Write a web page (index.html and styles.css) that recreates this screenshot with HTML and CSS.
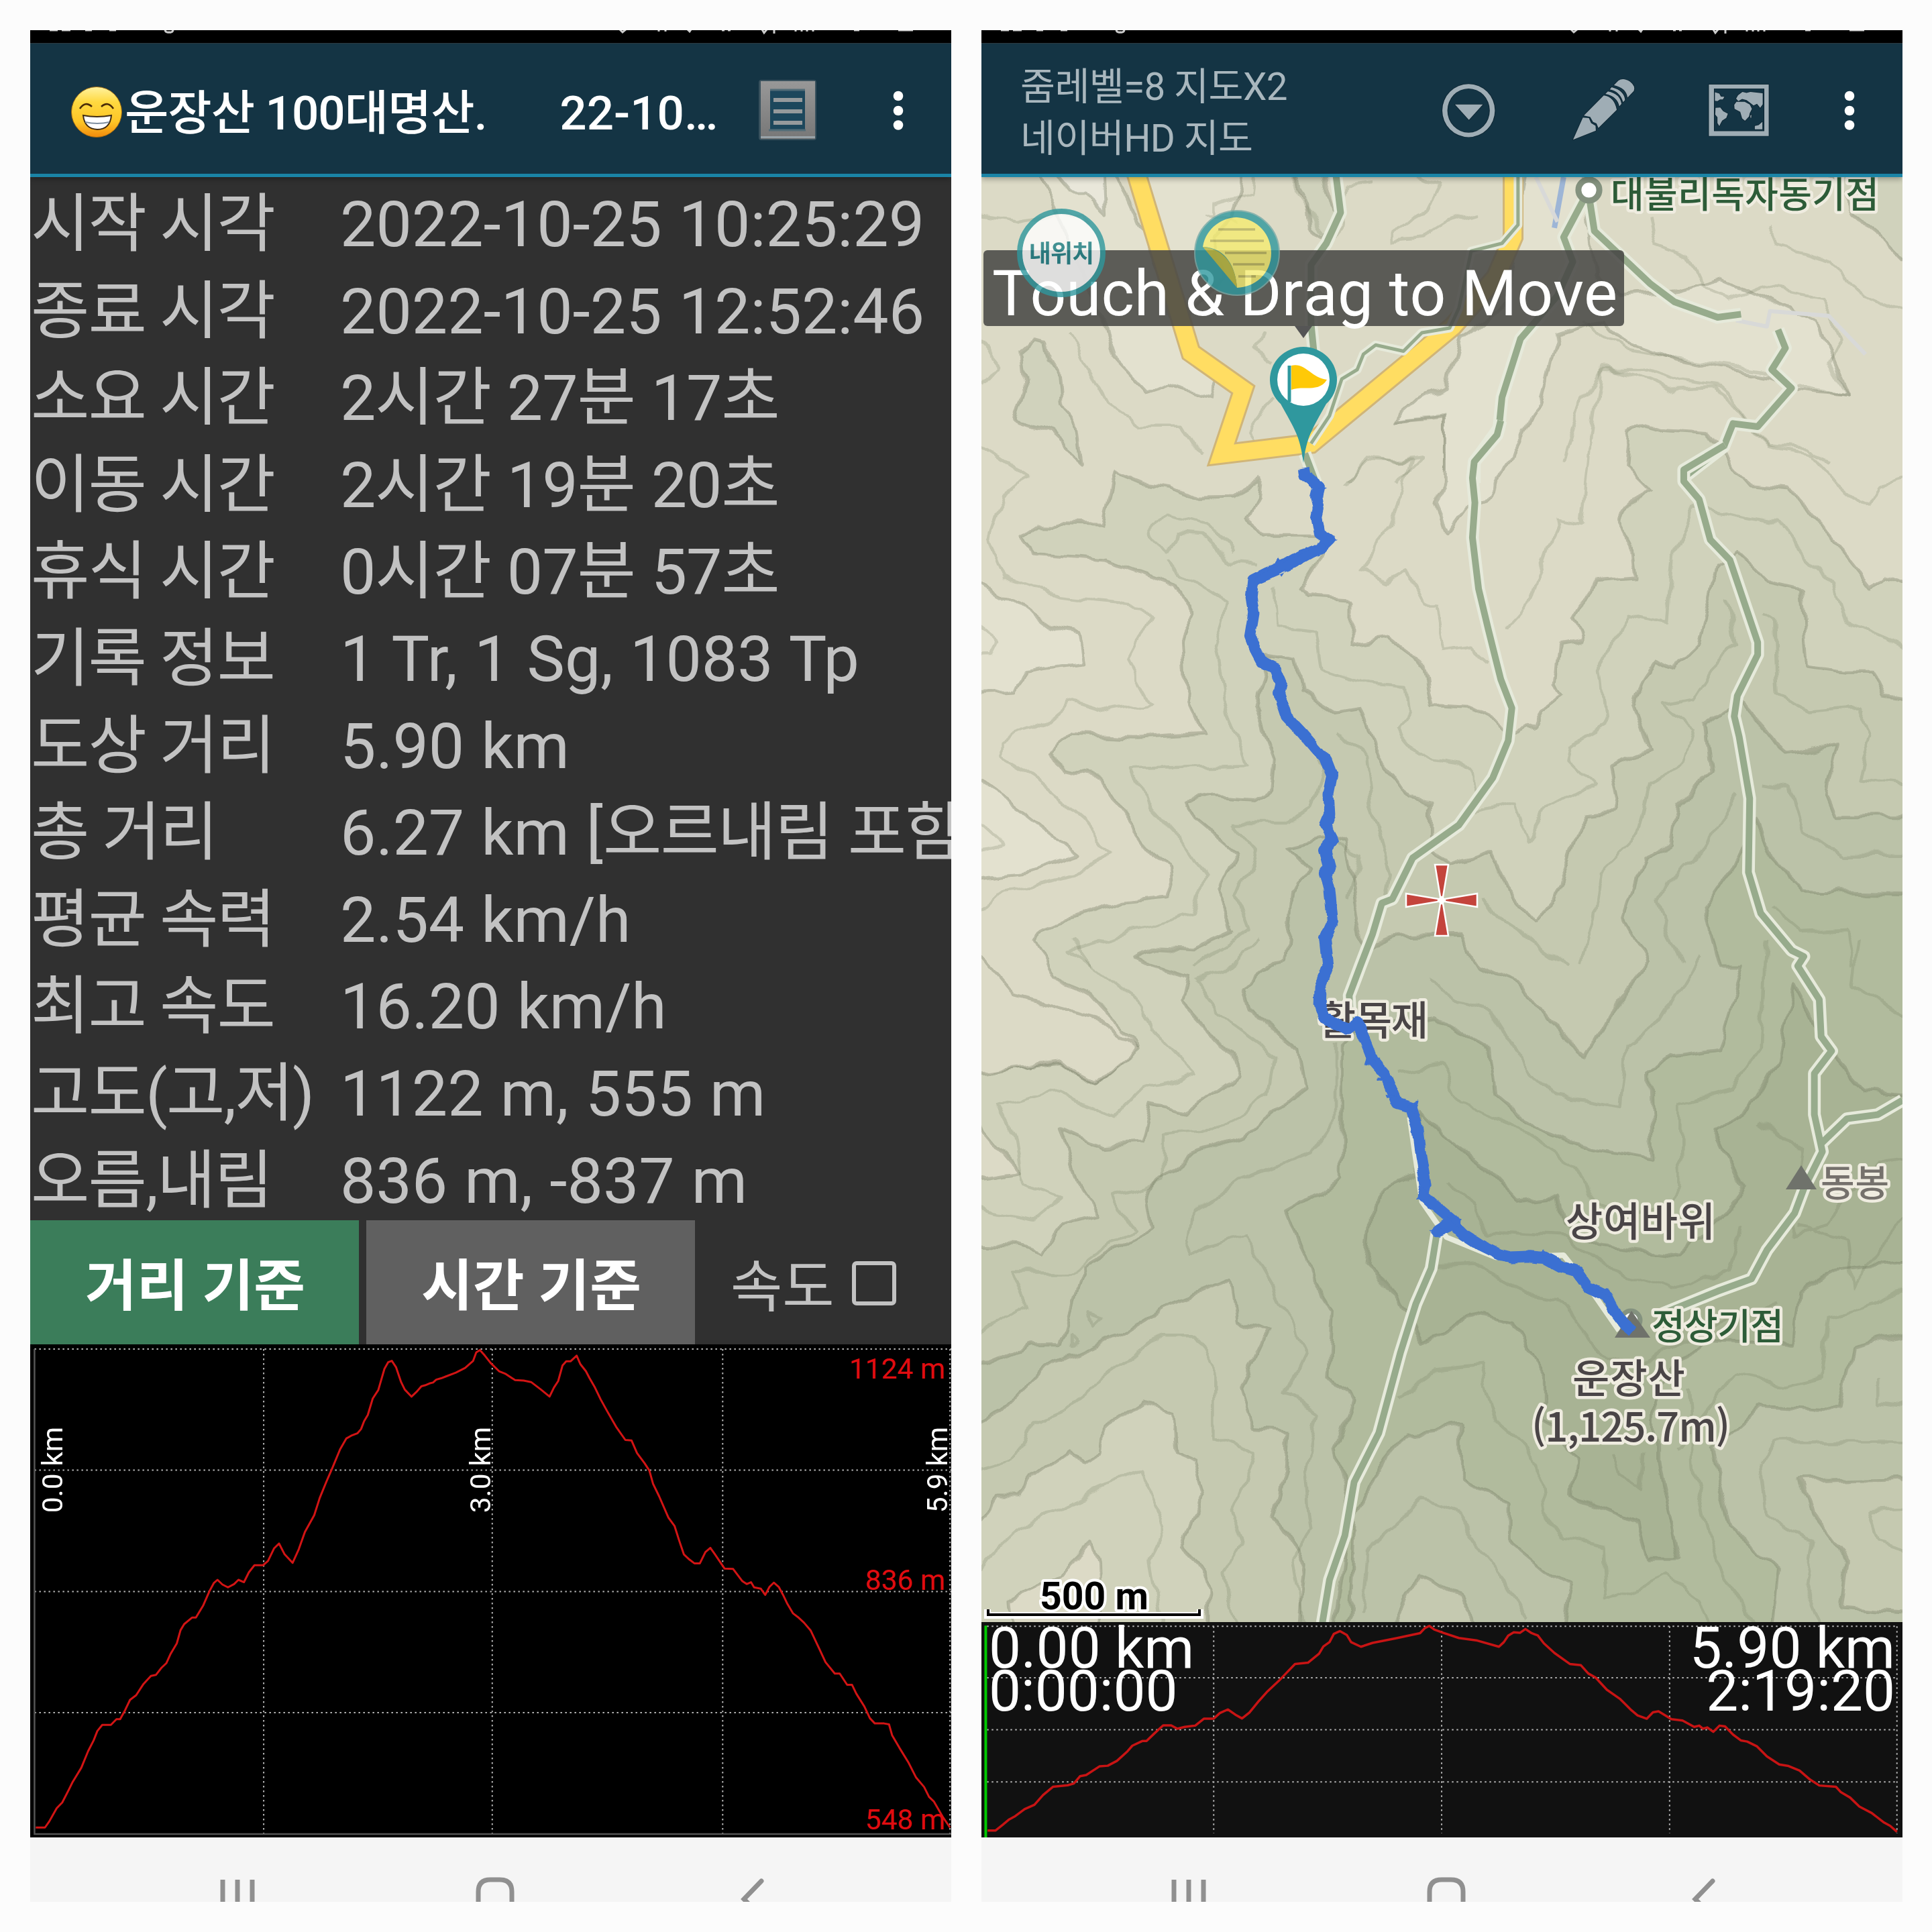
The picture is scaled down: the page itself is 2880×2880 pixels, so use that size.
FILE: index.html
```html
<!DOCTYPE html>
<html lang="ko">
<head>
<meta charset="utf-8">
<title>운장산 100대명산</title>
<link rel="stylesheet" href="styles.css">
</head>
<body>
<svg width="0" height="0" class="defs">
  <defs>
    <g id="status-bits">
      <path d="M29 0h12M47 0h13M82 0h10M118 0h10"/>
      <path d="M201 0q1 4 6 3q5 1 6 -3"/>
      <path d="M879 -1l4 4l6 -5M937 0v2M947 0v2M980 -1l3 3l2 -3M1031 0h4M1040 0h4M1091 -1l3 5l4 -5M1109 0v5M1141 0v2M1150 0v2M1158 0v2M1167 0v2M1228 0h8M1294 0h22"/>
    </g>
    <g id="nav-icons">
      <path d="M287 63v40M309 63v40M331 63v40"/>
      <path d="M668 103v-22q0 -18 18 -18h14q18 0 18 18v22"/>
      <path d="M1090 65l-26 27l14 14" stroke-linecap="round"/>
    </g>
  </defs>
</svg>
<main class="collage">

  <section class="phone">
    <svg class="status" viewBox="0 0 1373 19"><use href="#status-bits"/></svg>
    <header class="bar">
      <svg class="emoji" viewBox="0 0 78 78">
        <defs>
          <linearGradient id="face" x2="0" y2="1"><stop offset="0" stop-color="#fff2a0"/><stop offset=".3" stop-color="#ffd940"/><stop offset=".7" stop-color="#fdc526"/><stop offset="1" stop-color="#f28a0c"/></linearGradient>
        </defs>
        <circle cx="39" cy="39" r="37.5" fill="url(#face)" stroke="#a06a10" stroke-width="1"/>
        <path d="M14 34q8 -12 18 -3M46 31q10 -9 18 3" fill="none" stroke="#4a2c08" stroke-width="2.6"/>
        <path d="M19 44q20 4 42 0q-2 21 -21 21q-19 -1 -21 -21z" fill="#fff" stroke="#3e2a12" stroke-width="2"/>
        <path d="M22 54q18 4 36 0" fill="none" stroke="#7f8fa0" stroke-width="2"/>
      </svg>
      <h1 class="title"><span>운장산 100대명산.</span><span class="date">22-10…</span></h1>
      <svg class="list" viewBox="0 0 90 94">
        <defs><linearGradient id="steel" x2="0" y2="1"><stop offset="0" stop-color="#989898"/><stop offset="1" stop-color="#777"/></linearGradient></defs>
        <rect x="2" y="2" width="86" height="90" rx="4" fill="#5f7078" opacity=".5"/>
        <rect x="5" y="4" width="81" height="86" fill="url(#steel)"/>
        <rect x="5" y="86" width="81" height="3" fill="#98a2a8"/>
        <rect x="19" y="18" width="52" height="60" fill="#1c475c"/>
        <path d="M19 17h52M17 77h55" stroke="#526d78" stroke-width="3"/>
        <path d="M24 32h43M24 49h43M24 66h43" stroke="#959a9c" stroke-width="6"/>
      </svg>
      <svg class="more" viewBox="0 0 16 60"><circle cx="8" cy="8" r="7.3"/><circle cx="8" cy="30" r="7.3"/><circle cx="8" cy="51.500" r="7.3"/></svg>
    </header>

    <dl class="stats">
      <dt>시작 시각</dt><dd>2022-10-25 10:25:29</dd>
      <dt>종료 시각</dt><dd>2022-10-25 12:52:46</dd>
      <dt>소요 시간</dt><dd class="ko">2시간 27분 17초</dd>
      <dt>이동 시간</dt><dd class="ko">2시간 19분 20초</dd>
      <dt>휴식 시간</dt><dd class="ko">0시간 07분 57초</dd>
      <dt>기록 정보</dt><dd class="counts">1 Tr, 1 Sg, 1083 Tp</dd>
      <dt>도상 거리</dt><dd>5.90 km</dd>
      <dt>총 거리</dt><dd>6.27 km [<span class="note">오르내림 포함]</span></dd>
      <dt>평균 속력</dt><dd>2.54 km/h</dd>
      <dt>최고 속도</dt><dd>16.20 km/h</dd>
      <dt>고도(고,저)</dt><dd>1122 m, 555 m</dd>
      <dt>오름,내림</dt><dd>836 m, -837 m</dd>
    </dl>

    <div class="tabs">
      <button class="tab on">거리 기준</button>
      <button class="tab">시간 기준</button>
      <label class="speed">속도<i class="box"></i></label>
    </div>

    <div class="chart">
      <svg class="plot" viewBox="49 319 1495 1047" preserveAspectRatio="none">
        <path class="grid" d="M56 329H1544M56 586H1544M56 844H1544M56 1101H1544M428 329V1359M799 329V1359M1173 329V1359M1542 329V1359"/>
        <path class="axis" d="M56 329V1359H1544"/>
        <path class="line" d="M58 1345H73L80 1332L92 1304L101 1292L112 1264L118 1248L132 1218L143 1183L152 1160L158 1140L166 1127H180L189 1115H195L203 1096L211 1074L221 1064L233 1040L245 1023L253 1021L262 1006L270 996L277 976L287 954L293 926L299 913L312 899H318L330 873L340 843L347 826L353 819L361 829L370 835L380 828L387 819L396 824L404 803L413 788H427L435 779L445 752L453 742L462 765L475 783L485 754L495 717L510 682L519 645L530 610L540 580L552 542L562 519L570 513L580 508L586 499L591 482L597 469L605 434L614 416L624 371L630 357L636 354L643 368L651 399L657 415L668 430L676 420L684 408L690 406L697 402L703 400L708 394L716 391L724 387L740 379L755 369L768 354L773 336L779 331L787 343L796 358L810 376L821 382L836 395L850 396L862 399L878 415L892 430L899 411L906 397L913 364L919 355H926L936 343L942 361L951 376L957 391L965 409L975 436L986 462L1000 494L1015 522L1025 523L1034 550L1046 571L1054 587L1060 615L1070 642L1085 687L1095 705L1102 734L1110 765L1119 776L1127 784H1136L1145 760L1153 751L1160 764L1176 795L1190 796L1205 822L1212 828L1219 824L1224 835L1235 838L1242 851L1249 834L1256 825L1264 834L1271 851L1278 870L1287 890L1295 898L1305 910L1316 927L1330 966L1340 994L1355 1018H1363L1375 1042H1383L1390 1061L1403 1088L1412 1113L1420 1124H1435L1443 1126L1448 1149L1460 1176L1475 1208L1487 1239L1500 1259L1508 1280L1516 1290L1530 1322L1542 1345"/>
      </svg>
      <span class="alt top">1124 m</span>
      <span class="alt mid">836 m</span>
      <span class="alt low">548 m</span>
      <span class="dist d0">0.0 km</span>
      <span class="dist d1">3.0 km</span>
      <span class="dist d2">5.9 km</span>
    </div>
    <svg class="nav" viewBox="0 0 1373 96"><use href="#nav-icons"/></svg>
  </section>

  <section class="phone">
    <svg class="status" viewBox="0 0 1373 19"><use href="#status-bits"/></svg>
    <header class="bar">
      <p class="level">줌레벨=8 지도X2<br>네이버HD 지도</p>
      <svg class="tools" viewBox="90 210 1070 310" preserveAspectRatio="none">
        <g class="glyph">
          <path fill-rule="evenodd" d="M107 372a83 119 0 1 0 166 0a83 119 0 1 0 -166 0zM123 372a67 99 0 1 1 134 0a67 99 0 1 1 -134 0z"/>
          <path d="M147 345H235L191 414z"/>
          <path d="M520 503L551 403L570 406L577 428L591 440L592 462z"/>
          <path d="M554 394L617 304Q650 310 658 369L600 450L594 430L583 423L574 400z"/>
          <path d="M622 297L630 286Q668 296 673 342L666 353Q660 308 622 297z"/>
          <path d="M636 277L642 267Q682 282 684 325L678 334Q668 286 636 277z"/>
          <path d="M649 258L663 238Q678 223 700 242Q718 262 712 284L692 314Q688 270 649 258z"/>
          <path fill-rule="evenodd" d="M949 255H1138V486H949zM965 273V464H1124V273z"/>
          <path d="M968 290L982 296L987 309L998 310L993 322H984L976 330L968 328zM970 360L985 358L994 375L1009 386L1004 405L991 417L986 430L982 442L976 428V402L969 390z"/>
          <path d="M1036 333H1062L1078 345L1085 364L1078 384L1076 398L1063 418L1054 407L1048 378L1030 364L1029 346zM1035 318L1041 303L1055 288L1068 293L1080 288L1119 294V344L1111 360L1101 342L1090 349L1078 336L1068 325L1054 320L1042 330zM1083 390V404H1080V394zM1094 456V441L1106 437L1118 422V456z"/>
        </g>
      </svg>
      <svg class="more" viewBox="0 0 16 60"><circle cx="8" cy="8" r="7.3"/><circle cx="8" cy="30" r="7.3"/><circle cx="8" cy="51.500" r="7.3"/></svg>
    </header>

    <div class="map">
      <svg class="terrain" viewBox="1463 264 1373 2154">
        <defs>
          <filter id="wander" filterUnits="userSpaceOnUse" x="1443" y="244" width="1413" height="2194" color-interpolation-filters="sRGB">
            <feTurbulence type="fractalNoise" baseFrequency=".022" numOctaves="2" seed="4"/>
            <feDisplacementMap in="SourceGraphic" scale="24" xChannelSelector="R" yChannelSelector="G"/>
          </filter>
          <filter id="jitter" filterUnits="userSpaceOnUse" x="1443" y="244" width="1413" height="2194" color-interpolation-filters="sRGB">
            <feTurbulence type="fractalNoise" baseFrequency=".05" numOctaves="2" seed="9"/>
            <feDisplacementMap in="SourceGraphic" scale="7" xChannelSelector="R" yChannelSelector="G"/>
          </filter>
        </defs>
        <g filter="url(#wander)">
        <rect x="1443" y="244" width="1413" height="2194" fill="#dcdac6"/>
        <!-- elevation bands, lowest to highest -->
        <g class="bands" transform="matrix(.9184 0 0 .6122 1440 480)">
          <path fill="#e3e1cf" d="M120 -373L220 0L240 90L290 170L330 150L395 180L410 130L360 80L330 -20L270 -373zM240 -373H450L430 -250L400 -200L420 -110L350 0zM910 -373H1000L1020 -120L1060 -60L1160 -70L1230 -100L1290 -60L1380 0L1430 175L1350 160L1300 130L1150 90L1060 40L1040 -10L960 30L930 190L850 430L810 450L780 512L760 440L780 390V232L690 244L730 190L780 160L800 40L880 -50zM5 620L80 680L135 740L180 755L187 830L95 850L80 900L5 905zM5 1100L100 1200L183 1298L100 1340L5 1358zM5 1580L80 1700L5 1690z"/>
          <path fill="#e9e7da" d="M140 -373L170 -320L195 -320L225 -255L222 -373z"/>
          <path fill="#d0d2bc" d="M110 42L125 48L132 100L150 125L155 195L185 260L192 340L140 270L80 240L95 170L88 70zM520 -373H575L600 -250L580 -205L560 -230L555 -290zM1400 -373H1540V-120L1480 -210L1440 -260z"/>
          <path fill="#d0d2bb" d="M240 365L285 393L335 403L375 430L430 428L475 390L472 430L455 478L490 520H580L575 570L540 655L550 672L625 680V785L685 772L742 835L755 935L820 940L895 995L907 980L920 997L932 945L965 910L955 880L962 785L1000 775L985 722L1020 630L1090 622L1085 550L1060 480L1110 410L1070 350L1075 265L1090 248L1130 265L1200 272L1275 402L1340 410L1390 500L1470 650L1490 622L1545 650V3200H0V1828L150 1806L210 1855L280 1763L200 1633L145 1600L112 1503L120 1480L250 1410L330 1398L325 1330L290 1262L250 1180L220 1110L165 1092L135 1050L175 1003L270 1010L385 1000L355 900L350 780L370 712L340 640L230 580L110 565L85 522L120 488L220 492z"/>
          <path fill="#c5c9b0" d="M490 810L535 822L545 900L600 950L640 940L670 1060L720 1160L755 1170V1290L790 1320L850 1288L882 1390L925 1462L960 1400L990 1270L1010 1200L1060 1192L1045 1080L1110 1040L1085 930L1120 820L1150 840L1190 780L1220 590L1250 560L1300 632L1355 650L1365 838L1430 850L1470 850L1490 912L1545 925V3200H0V2245L80 2250L125 2272L160 2196L215 2180L185 2110L155 1963L220 2007L285 2001L300 1904L360 1925L440 1839L430 1785L350 1655L360 1590L268 1545L300 1525L370 1530L435 1485L410 1380L440 1290L375 1210L362 1165L400 1155L470 1162L495 1140L500 1060L470 940z"/>
          <path fill="#bbc2a8" d="M520 1275L590 1250L615 1262L650 1530L700 1500L800 1495L830 1568L900 1611L980 1763L1005 1795L1050 1676L1110 1557L1070 1450L1100 1310L1145 1270L1155 1170L1210 1100L1200 980L1260 920L1310 1020L1335 1052L1415 1025L1395 1150L1410 1205L1545 1205V3200H0V2555L105 2489L155 2489L190 2304L300 2207L290 2110L360 2034L450 1990L550 1871L540 1774L460 1676L450 1622L520 1546L530 1390L555 1330z"/>
          <path fill="#b1bb9d" d="M520 2163L610 2088V1763L640 1720L765 1698L850 1774L860 1882L920 1958L1010 2010L1115 2039L1110 1828L1150 1790L1220 1774L1260 1568L1225 1568L1200 1430L1250 1320L1280 1210L1300 1290L1360 1385L1545 1390V3200H595L625 2911L600 2749L625 2630L590 2575L595 2402L560 2315z"/>
        </g>
        <g class="bands" transform="matrix(.9184 0 0 .66327 1440 1400)">
          <path fill="#a8b394" d="M740 380L770 440L830 500L890 590L960 580L970 640L1030 690L1160 712L1215 640L1260 560L1215 430L1275 385L1320 270L1345 100L1400 250L1460 345L1545 355V720L1420 740L1350 790L1340 910L1200 900L1120 1000V1180L1155 1395H1105L1090 1310L985 1250L990 1160L940 1080V980L890 860L820 840L740 910L700 800L650 740L660 600L680 560L730 530z"/>
          <path fill="#c5c9b0" d="M0 1100L60 1060L130 960L260 880L330 820L430 765L440 850L490 880L445 1010L465 1100L525 1105L520 1200L500 1300L550 1400L540 1560H0z"/>
          <path fill="#d0d2bb" d="M0 1365L50 1250L90 1250L110 1210L170 1150L190 1180L220 1150L225 1100L290 1040L335 1060L340 1150L375 1170L390 1240L350 1360L395 1460V1560H0z"/>
          <path fill="#dcdac6" d="M205 1355L150 1430L75 1480L80 1560H220L215 1400zM0 0L80 130L215 180L280 245L210 325L150 278L0 305zM0 380L85 520L0 540z"/>
          <path fill="#bbc2a8" d="M620 1560L630 1300L665 1200L720 1110L805 1098V1215L880 1260V1350L950 1430L980 1450L965 1560zM1310 1560L1320 1420L1240 1320L1210 1150L1290 1050L1420 1060L1440 920L1545 885V1560z"/>
          <path fill="#c5c9b0" d="M685 1560L735 1430L800 1470L835 1560zM1545 1208L1350 1218L1370 1290L1430 1400L1420 1500L1545 1515z"/>
        </g>
        <!-- intermediate contours -->
        <g class="contour" transform="matrix(.9184 0 0 .45918 1440 0)">
          <path d="M5 700L90 720L145 695L185 690L200 730M470 555L465 625L400 660V700L390 700L440 725M520 555L560 690L580 760M660 590L620 600L610 730L590 780M700 555L770 600L750 680L690 750V780L740 770L780 720L830 690M1110 700L1120 790L1175 830L1200 940L1240 970L1290 930L1390 970L1420 1100L1400 1180L1430 1280L1350 1245M1300 730L1320 800L1400 850L1460 960L1540 1030M1000 1040L1070 1130L1150 1160L1290 1200L1340 1240M5 1080L50 1190L5 1290M170 1080L200 1200L230 1310L280 1380L350 1380L380 1480M480 1080L470 1140L500 1180M690 1370L780 1350V1530M970 1500L1000 1300L1030 1200L1100 1200L1160 1240L1220 1260L1260 1330L1300 1440L1360 1450L1400 1500M500 1290L460 1400L470 1430L520 1420M620 1568L650 1480L700 1500L740 1490L700 1568"/>
        </g>
        <g class="contour" transform="matrix(.9184 0 0 .6122 1440 480)">
          <path d="M5 280L105 380L60 420L35 530L60 620L150 670L290 690L300 720L265 820L305 930L230 950L165 920L110 990L55 1020V1060L110 1110L190 1210L230 1290L180 1350L60 1390L5 1450M5 730L50 780L40 810L5 812M5 1200L60 1275L5 1295M480 590L430 585L385 520L345 515L325 560L300 510L325 465L390 490L430 560M330 580L350 620L425 690L405 790L420 920L455 1080L270 1090L290 1170L345 1260L385 1350L370 1440L165 1530L200 1568M500 640L505 740L570 750L580 850L640 880L715 890L720 950L700 990L740 1060L820 1080L830 1200L890 1175L910 1265L940 1190L1015 1130L975 1070L980 1030L1040 980L1030 850L1070 710L1140 730L1150 560L1180 450L1320 490L1360 570L1410 640L1430 730L1540 800M615 400L650 335L720 340L690 500L640 600L685 630L715 605L740 690L765 690L780 800L815 790L845 830M875 745L915 680L960 480L1000 490L1015 270L1030 110L1080 125L1150 170L1210 165L1260 220L1300 300L1370 320L1400 370L1465 450L1480 400L1540 375M430 1220L520 1220L560 1180L580 1080L540 990M430 1220L470 1290L440 1400L460 1480L370 1568M600 1000L650 1060L660 1180L690 1350L680 1440M590 1260L640 1300L620 1400M840 1390L860 1450L950 1540L980 1568M1000 1568L1020 1450L1030 1340L1090 1250L1110 1120L1165 1080L1180 1000L1130 935L1180 920L1210 850L1250 790L1240 680M1290 710L1310 730L1315 910L1370 950L1450 940L1470 1000L1450 1110L1540 1125M1290 1130L1340 1140L1360 1240L1420 1300L1540 1300M1250 1150L1190 1300L1120 1400L1160 1568M1310 1430L1350 1480L1430 1475L1440 1568"/>
        </g>
        <g class="contour" transform="matrix(.9184 0 0 .66327 1440 1400)">
          <path d="M170 0L200 60L290 150L300 200L370 300L290 330L240 400L150 340L50 375L75 440L90 550L155 580L110 630L5 600M370 95L420 70L480 0M370 95L410 170L500 260L490 350L400 430L320 440L320 540L240 580L270 650L170 750L75 750L100 830L5 890M600 230V400L560 480L450 540L370 610L360 710L450 660L500 780L550 930L520 1020L570 1060L550 1200L560 1330L530 1390L550 1556M700 300L770 280L800 370L890 420L990 510L1020 590L1110 620L1160 560V370L1240 340L1290 240L1300 0M750 90L800 140L850 160L910 290L960 350L1060 375L1070 240L1130 180L1190 40M700 1030L760 970L835 960L860 1080L900 1130L930 1180L940 1290L970 1350L1035 1370L1040 1490L1140 1430L1190 1480L1210 1556M640 1520L650 1380L740 1260L800 1290L840 1380L880 1450L910 1530M160 1060L240 970L320 890L370 890L400 960L400 1120L470 1160L430 1290L450 1360L420 1430L440 1556M5 1195L70 1170L110 1090L160 1060M5 1440L80 1340L130 1290L280 1200L320 1320L300 1400L320 1556M760 740L830 735L910 800L960 810L1010 900L1040 940L1100 960L1190 880L1310 820M780 550L830 600L850 660L970 670L1040 740L1150 790L1240 740L1260 650M1290 410L1360 480L1340 660L1400 640L1480 500L1540 490M1350 640L1430 680L1440 780L1540 590M1170 1000L1180 1180L1200 1300L1220 1400L1280 1556M1050 1150L1060 1210L1095 1240L1100 1160M1150 1150L1250 980L1330 1000L1390 980L1400 850L1480 820L1540 770M1290 1180L1310 1130L1540 1130M1290 1180L1300 1290L1370 1350L1360 1450L1390 1556M1540 1280L1465 1285L1480 1350L1540 1375M1480 980V1040L1540 1052M200 840L220 850L205 870zM170 885L180 900L170 915zM1450 0L1440 100L1540 190"/>
        </g>
        </g>

        <!-- roads -->
        <g class="roads" transform="matrix(.9184 0 0 .45918 1440 0)">
          <path class="yc" d="M276 560L365 1145L450 1265L415 1475L560 1440L790 1060L860 900L888 770V560"/>
          <path class="yf" d="M276 560L365 1145L450 1265L415 1475L560 1440L790 1060L860 900L888 770V560"/>
          <path class="wc thin" d="M896 560V730L870 790L820 815L800 1000L785 1065L740 1080L710 1140L665 1120L645 1150L635 1200L610 1230L590 1350L560 1440"/>
          <path class="gf thin" d="M896 560V730L870 790L820 815L800 1000L785 1065L740 1080L710 1140L665 1120L645 1150L635 1200L610 1230L590 1350L560 1440"/>
          <path class="stream" d="M970 575L955 740"/><path class="lane" d="M925 575L960 720M1250 1040L1300 1060L1305 1010L1400 1025L1460 1150"/>
          <path class="wc" d="M600 560L608 690L585 790L560 860V1050L565 1150"/>
          <path class="gf" d="M600 560L608 690L585 790L560 860V1050L565 1150"/>
          <path class="wc" d="M1010 620L970 770L985 850L960 960L900 1100L870 1290L865 1390L825 1500V1568M1010 620L1020 750L1110 920L1150 980L1220 1030L1258 1020M1318 1070L1330 1130L1308 1200L1340 1260L1285 1385L1245 1375L1230 1450L1165 1550"/>
          <path class="gf" d="M1010 620L970 770L985 850L960 960L900 1100L870 1290L865 1390L825 1500V1568M1010 620L1020 750L1110 920L1150 980L1220 1030L1258 1020M1318 1070L1330 1130L1308 1200L1340 1260L1285 1385L1245 1375L1230 1450L1165 1550"/>
          <ellipse cx="1011" cy="617" rx="17" ry="34" fill="#fff" stroke="#84927f" stroke-width="9" vector-effect="non-scaling-stroke"/>
        </g>
        <g class="roads" transform="matrix(.9184 0 0 .6122 1440 480)">
          <path class="wc" d="M550 320L570 400M868 240L862 275L825 340L822 380L826 440L822 525L832 650L848 750L868 870L886 940L880 1020L855 1110L800 1225L725 1305L692 1405L675 1415L660 1490L640 1568L622 1640L625 1720"/>
          <path class="gf" d="M550 320L570 400M868 240L862 275L825 340L822 380L826 440L822 525L832 650L848 750L868 870L886 940L880 1020L855 1110L800 1225L725 1305L692 1405L675 1415L660 1490L640 1568L622 1640L625 1720"/>
          <path class="wc" d="M1232 300L1165 360V388L1190 432L1208 530L1240 580L1285 780V810L1252 910L1247 960L1255 1010L1272 1160L1270 1340L1290 1440L1340 1530L1360 1545L1350 1568L1385 1650L1388 1740L1405 1775L1377 1830V1930L1390 2020L1360 2110L1345 2170L1300 2260L1275 2330L1220 2360L1130 2415M1385 2005L1430 1940L1480 1930L1520 1895"/>
          <path class="gf" d="M1232 300L1165 360V388L1190 432L1208 530L1240 580L1285 780V810L1252 910L1247 960L1255 1010L1272 1160L1270 1340L1290 1440L1340 1530L1360 1545L1350 1568L1385 1650L1388 1740L1405 1775L1377 1830V1930L1390 2020L1360 2110L1345 2170L1300 2260L1275 2330L1220 2360L1130 2415M1385 2005L1430 1940L1480 1930L1520 1895"/>
        </g>
        <g class="roads" transform="matrix(.9184 0 0 .66327 1440 1400)">
          <path class="wc" d="M765 655L755 740L730 820L705 930L670 1110L630 1220L615 1340L590 1440L578 1540"/>
          <path class="gf" d="M765 655L755 740L730 820L705 930L670 1110L630 1220L615 1340L590 1440L578 1540"/>
          <path class="edge" d="M720 400L740 590L780 670L860 715L970 710L1010 780L1060 880"/>
        </g>

        <!-- place labels -->
        <g class="place">
          <text x="2401" y="310" class="green" textLength="400">대불리독자동기점</text>
          <text x="1966" y="1543" class="big" textLength="163">활목재</text>
          <text x="2334" y="1843" class="big" textLength="223">상여바위</text>
          <text x="2344" y="2077" class="big" textLength="168">운장산</text>
          <text x="2283" y="2149" class="big" textLength="296">(1,125.7m)</text>
          <text x="2714" y="1783" class="grey" textLength="102">동봉</text>
          <text x="2462" y="1997" class="green" textLength="197">정상기점</text>
        </g>
        <path d="M2662 1773L2685 1737L2708 1773z" fill="#6f726b"/>
        <circle cx="2431" cy="1968" r="14" fill="#fff" stroke="#84927f" stroke-width="7"/>
        <path d="M2407 1994L2432 1954L2460 1994z" fill="#6f726b"/>

        <!-- recorded track -->
        <g filter="url(#jitter)">
        <path class="track" transform="matrix(.9184 0 0 .6122 1440 480)" d="M548 357L550 374L560 385L572 400L568 425L572 455L569 475L574 515L590 530L575 552L545 568L520 590L490 610L466 628L463 670L467 710L461 765L470 800L480 828L502 845L512 880L508 905L520 960L545 1000L568 1040L585 1070L594 1105L588 1150L590 1200L583 1225L595 1260L582 1285L590 1330L583 1340L590 1380L595 1460L583 1500L588 1568L575 1620L574 1660L582 1695L600 1708L620 1722L635 1706L648 1750L660 1795L680 1830L688 1860L700 1902L722 1912L732 1960L738 2030L746 2100L742 2125L760 2150L790 2188L765 2213L790 2195L808 2222L835 2248L865 2270L885 2277L915 2275L938 2278L965 2300L992 2312L1010 2350L1040 2372L1052 2408L1068 2440L1082 2458"/>
        <path class="spurs" transform="matrix(.9184 0 0 .6122 1440 480)" d="M572 400L585 406L572 412zM583 518L602 532L588 546zM500 592L508 574L516 590zM505 606L512 622L520 604zM466 625L520 582L580 540L584 556L530 602L470 640zM583 1240L605 1262L590 1270zM650 1790L646 1814L668 1802zM668 1838V1848L690 1852zM680 1878L682 1888L700 1886zM716 1908L735 1895L728 1925zM740 2105L730 2135L756 2132zM750 2210L762 2226L782 2205zM782 2180L803 2184L802 2206zM930 2270L938 2260L946 2280zM1028 2360L1042 2352L1050 2376z"/>
        </g>
        <!-- map centre -->
        <g class="cross">
          <path d="M2139 1289h20l-8 48h-4zM2139 1395h20l-8 -48h-4zM2096 1332v20l48 -8v-4zM2202 1332v20l-48 -8v-4z"/>
          <circle cx="2149" cy="1342" r="5" fill="#fff" stroke="none"/>
        </g>
        <!-- start pin -->
        <path d="M1943 690C1938 650 1930 640 1909 602A50 49 0 1 1 1977 602C1956 640 1948 650 1943 690z" fill="#2f989e"/>
        <circle cx="1943" cy="566" r="39" fill="#fff"/>
        <path d="M1925 545C1946 540 1954 563 1978 566C1966 586 1942 574 1925 581z" fill="#ffc907"/>
        <path d="M1922 545V599" stroke="#2f989e" stroke-width="5"/>
        <!-- scale -->
        <path d="M1472 2399V2408H1789V2399" fill="none" stroke="#fff" stroke-width="10"/>
        <path d="M1473 2399V2407H1788V2399" fill="none" stroke="#000" stroke-width="4"/>
        <text x="1550" y="2399" class="scale" textLength="162" lengthAdjust="spacingAndGlyphs">500 m</text>
      </svg>
      <div class="tip">Touch &amp; Drag to Move</div>
      <div class="here">내위치</div>
      <svg class="memo" viewBox="0 0 132 132">
        <circle cx="66" cy="66" r="63" fill="#2f989e" stroke="#78aaa8" stroke-width="2"/>
        <path d="M15 57C20 25 50 12 66 13C98 15 117 40 117 66C117 98 92 117 66 118C64 88 50 58 15 57z" fill="#f5ec72"/>
        <path d="M15 57C48 60 64 86 66 118z" fill="#b9b83e"/>
        <path d="M38 31H93M26 48H106M48 66H110M60 83H107M68 101H94" stroke="#b9b35b" stroke-width="3.500"/>
      </svg>
    </div>

    <div class="strip">
      <svg class="plot" viewBox="25 362 1495 838" preserveAspectRatio="none">
        <path class="grid" d="M34 378H1512M34 579H1512M34 781H1512M34 984H1512M402 378V1184M772 378V1184M1142 378V1184M1511 378V1184"/>
        <path class="line" d="M35 1173H48L60 1150L70 1130L80 1117L95 1090L111 1073L125 1035L141 1003L165 997L175 990L185 962L195 957L217 923L230 921L245 902L262 865L270 843L286 825H293L305 797L314 777L320 764H333L343 777L355 770L372 765L386 738H402L412 716L425 702L437 722L448 737L460 714L475 670L488 635L508 590L520 560L534 525L555 520L573 485L580 457L590 440L597 408L607 397L618 412L625 440L641 458L660 443L700 424L737 405L745 385L752 377L760 391L775 404L800 424L830 434L865 458L873 440L880 415L889 402L899 404L908 389L918 405L928 414L938 445L955 482L980 525L998 530L1010 562L1022 578L1040 625L1062 662L1080 705L1090 725L1105 738L1115 713L1124 709L1145 740L1163 745L1182 770L1190 765L1196 777L1203 772L1213 789L1223 765L1232 768L1245 800L1258 823L1268 827L1284 846L1300 885L1320 916L1335 922L1353 940L1370 975L1385 998L1412 1003L1420 1024L1435 1045L1450 1080L1470 1105L1490 1142L1500 1155L1511 1178"/>
        <path class="cursor" d="M32 376V1200"/>
      </svg>
      <p>0.00 km<br>0:00:00</p>
      <p class="end">5.90 km<br>2:19:20</p>
    </div>
    <svg class="nav" viewBox="0 0 1373 96"><use href="#nav-icons"/></svg>
  </section>
</main>
</body>
</html>
```

FILE: styles.css
```css
* { box-sizing: border-box; }
body, h1, p, dl, dt, dd { margin: 0; }
body { background: #fcfcfc; font-family: Roboto, "Noto Sans CJK KR", sans-serif; font-kerning: none; }
svg { display: block; flex: none; }
.defs { position: absolute; }

.collage { display: flex; gap: 45px; padding: 45px 44px 45px 45px; height: 2880px; overflow: hidden; }
.phone { width: 1373px; height: 2790px; display: flex; flex-direction: column; overflow: hidden; }
.status { width: 1373px; height: 19px; background: #000; fill: none; stroke: #ccc; stroke-width: 3; }

.bar { height: 200px; flex: none; display: flex; align-items: center; background: #143444; border-bottom: 5px solid #1a84a6; border-top: 1px solid #2b3a40; box-shadow: 0 3px 8px rgba(0,0,0,.3); position: relative; z-index: 1; }
.emoji { width: 78px; height: 78px; margin: 9px 3px 0 60px; }
.title { display: flex; align-items: baseline; width: 924px; font-size: 71px; font-weight: 500; color: #fff; white-space: nowrap; letter-spacing: -1px; }
.date { margin-left: 109px; letter-spacing: 0; }
.list { width: 90px; height: 94px; margin: 3px 0 0 19px; }
.more { width: 16px; height: 60px; fill: #fff; margin: 6px 71px 0 auto; }
.level { width: 640px; padding-left: 58px; font-size: 56.500px; line-height: 77px; font-weight: 400; color: #a9b7be; padding-top: 13px; letter-spacing: -.6px; white-space: nowrap; }
.tools { width: 505px; height: 103px; margin: 0 0 0 39px; }
.glyph path { fill: #9fadb5; stroke: #0c2431; stroke-width: 4; paint-order: stroke; stroke-linejoin: round; }

.stats { background: #303030; height: 1555px; display: grid; grid-template-columns: 462px 1fr; grid-auto-rows: 129.600px; font-size: 95px; line-height: 142px; color: #c2c2c2; white-space: nowrap; word-spacing: 1.500px; }
.stats dt, .stats dd { height: 129.600px; }
.stats dt { padding-left: 1px; letter-spacing: -1.800px; word-spacing: -1px; }
.ko { letter-spacing: -1.100px; }
.note { letter-spacing: -2px; }
.counts { font-kerning: normal; }

.tabs { height: 185px; flex: none; display: flex; gap: 11px; background: #303030; }
.tab { width: 490px; border: 0; padding: 0 0 4px 2px; background: #606060; color: #fff; font: 700 83.500px Roboto, "Noto Sans CJK KR", sans-serif; }
.tab.on { background: #3b7d5a; }
.speed { display: flex; align-items: center; font-size: 84px; color: #c2c2c2; padding-left: 42px; }
.box { width: 66px; height: 66px; border: 6px solid #c2c2c2; border-radius: 7px; margin: 3px 0 0 26px; }

.chart { position: relative; height: 735px; flex: none; background: #000; overflow: hidden; color: #fff; }
.plot { width: 100%; height: 100%; fill: none; }
.plot path { vector-effect: non-scaling-stroke; }
.grid { stroke: #b4b4b4; stroke-width: 2; stroke-dasharray: 2.500 4.500; }
.axis { stroke: #555; stroke-width: 2.500; }
.line { stroke: #d21414; stroke-width: 3; stroke-linejoin: round; }
.alt { position: absolute; right: 9px; font-size: 42.500px; line-height: 48px; color: #e00c10; }
.top { top: 13px; }
.mid { top: 328px; }
.low { top: 685px; }
.dist { position: absolute; font-size: 42.500px; line-height: 48px; writing-mode: vertical-rl; transform: rotate(180deg); top: 123px; }
.d0 { left: 10px; }
.d1 { left: 648px; }
.d2 { left: 1329px; }
.nav { width: 1373px; height: 96px; background: #f5f5f5; fill: none; stroke: #909090; stroke-width: 7; }

.map { position: relative; height: 2154px; flex: none; overflow: hidden; background: #dcdac6; }
.terrain { width: 1373px; height: 2154px; background: #dcdac6; }
.bands path, .contour path { vector-effect: non-scaling-stroke; stroke: #6f765d; stroke-opacity: .34; stroke-width: 5; stroke-linejoin: round; }
.contour path { fill: none; stroke-opacity: .22; stroke-width: 4.500; }
.roads path { vector-effect: non-scaling-stroke; fill: none; stroke-linejoin: round; }
.yc { stroke: #d0b578; stroke-width: 31; }
.roads .yc, .roads .yf { stroke-linejoin: miter; }
.yf { stroke: #ffdd62; stroke-width: 25; }
.wc { stroke: #e6eadb; stroke-width: 19; }
.gf { stroke: #97ab8c; stroke-width: 10; }
.wc.thin { stroke-width: 13; }
.gf.thin { stroke-width: 5; }
.stream { stroke: #9db5d6; stroke-width: 8; }
.lane { stroke: #d8d9d8; stroke-width: 6; }
.edge { stroke: #e6eadb; stroke-width: 8; }
.place text { font-family: "Noto Sans CJK KR", sans-serif; font-weight: 500; font-size: 54px; stroke: #efece0; stroke-width: 9; stroke-linejoin: round; paint-order: stroke; fill: #4a4547; }
.place .big { font-size: 60px; }
.place .green { fill: #2d5c38; }
.place .grey { fill: #75716c; font-size: 55px; }
.track { fill: none; stroke: #3b70d2; stroke-width: 17; stroke-linejoin: round; vector-effect: non-scaling-stroke; }
.spurs { fill: #3b70d2; }
.cross { fill: #c4443c; stroke: #fff; stroke-width: 2.500; }
.scale { font-weight: 700; font-size: 57px; stroke: #fff; stroke-width: 8; paint-order: stroke; stroke-linejoin: round; }
.tip { position: absolute; left: 3px; top: 109px; width: 955px; height: 113px; padding-left: 13px; border-radius: 6px; background: rgba(70,70,68,.86); color: #fff; font-size: 94.500px; line-height: 129px; white-space: nowrap; }
.tip::after { content: ""; position: absolute; left: 464px; top: 113px; border: solid transparent; border-width: 18px 13px 0; border-top-color: #555; }
.here, .memo { position: absolute; width: 132px; height: 132px; top: 47px; opacity: .8; }
.here { left: 53px; border: 8px solid #2f989e; border-radius: 50%; background: #fff; color: #1d7f86; font-size: 36px; font-weight: 700; text-align: center; line-height: 120px; white-space: nowrap; letter-spacing: -1px; }
.memo { left: 315px; }

.strip { position: relative; height: 321px; flex: none; background: #111; color: #fff; }
.strip p { position: absolute; left: 11px; top: 7px; font-size: 85.500px; line-height: 64px; }
.strip .end { left: auto; right: 11px; text-align: right; }
.strip .line { stroke: #c81414; stroke-width: 3.500; }
.cursor { stroke: #00c800; stroke-width: 4; }
```
